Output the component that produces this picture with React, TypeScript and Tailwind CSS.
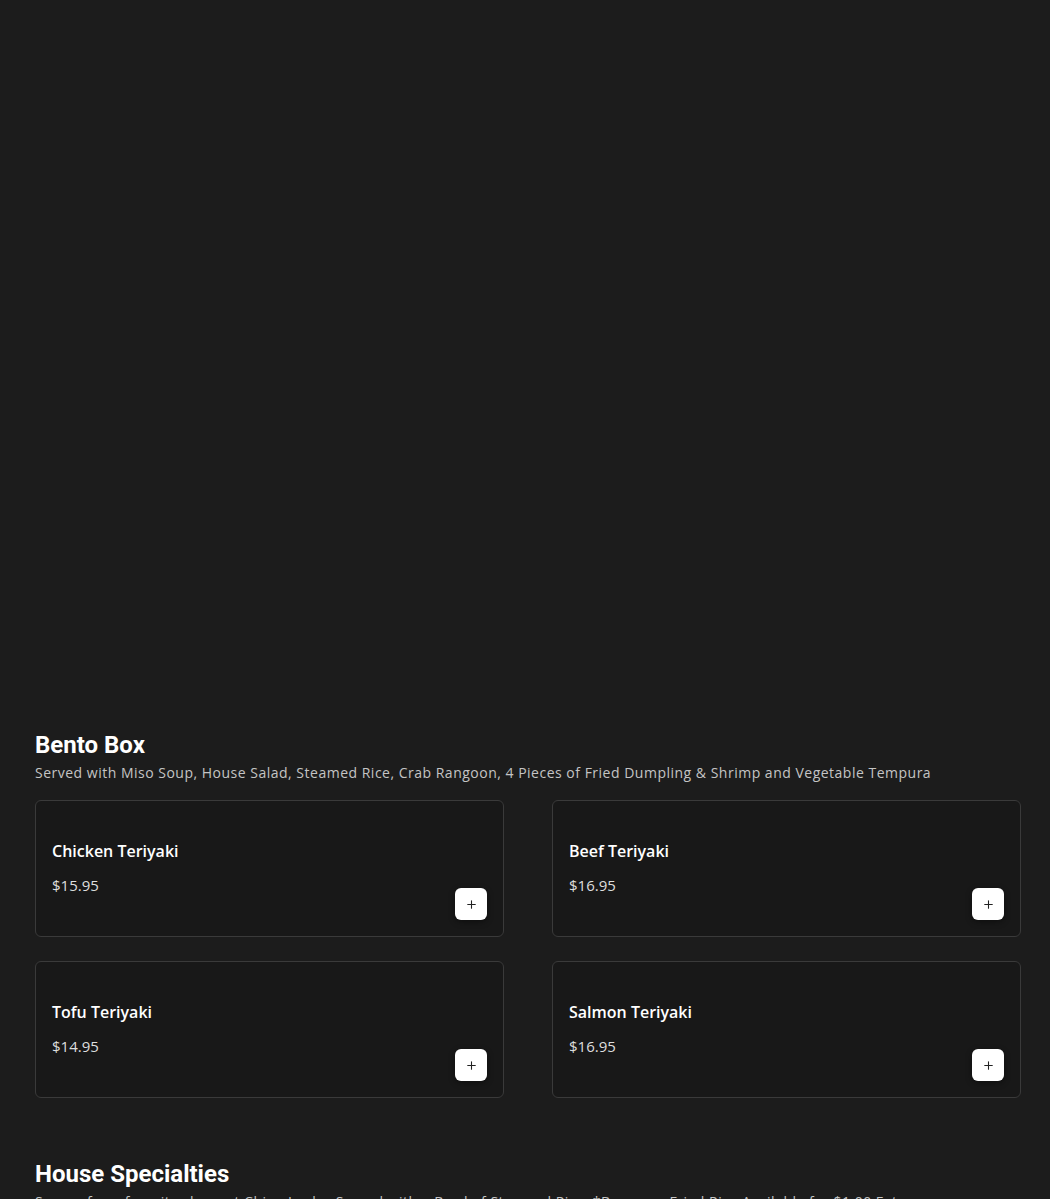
import { Plus } from "lucide-react";

type Item = { name: string; price: string };

const bento: Item[] = [
  { name: "Chicken Teriyaki", price: "$15.95" },
  { name: "Beef Teriyaki", price: "$16.95" },
  { name: "Tofu Teriyaki", price: "$14.95" },
  { name: "Salmon Teriyaki", price: "$16.95" },
];

const body = { fontFamily: '"Open Sans", "Noto Sans", sans-serif' };
const head = { fontFamily: 'Roboto, "Liberation Sans", sans-serif' };

function ItemCard({ item }: { item: Item }) {
  return (
    <div className="flex h-[137px] items-end justify-between rounded-md border border-[#3a3a3a] bg-[#181818] px-4 pb-4 pt-[36px]">
      <div className="flex h-full flex-col self-start">
        <div className="text-[16px] font-semibold leading-[28px] text-white">{item.name}</div>
        <div className="mt-[6px] text-[15px] leading-[28px] text-[#dedede]">{item.price}</div>
      </div>
      <button className="flex h-8 w-8 items-center justify-center rounded-md bg-white text-[#222] shadow-[0_2px_6px_rgba(0,0,0,0.4)]">
        <Plus size={13} strokeWidth={2} />
      </button>
    </div>
  );
}

function Section({
  title,
  desc,
  items,
}: {
  title: string;
  desc: string;
  items: Item[];
}) {
  return (
    <section className="mb-[61px]">
      <h2 className="text-[24px] font-bold leading-[30px] text-white" style={head}>
        {title}
      </h2>
      <p className="text-[14px] leading-[26px] tracking-[0.5px] text-[#c4c4c4]">{desc}</p>
      {items.length > 0 && (
        <div className="mt-[14px] grid grid-cols-2 gap-x-[48px] gap-y-[24px]">
          {items.map((it) => (
            <ItemCard key={it.name} item={it} />
          ))}
        </div>
      )}
    </section>
  );
}

export default function App() {
  return (
    <div className="min-h-screen bg-[#1c1c1c]" style={body}>
      {/* empty hero area */}
      <div className="h-[730px]" />
      <div className="px-[35px] pr-[29px]">
        <Section
          title="Bento Box"
          desc="Served with Miso Soup, House Salad, Steamed Rice, Crab Rangoon, 4 Pieces of Fried Dumpling & Shrimp and Vegetable Tempura"
          items={bento}
        />
        <Section
          title="House Specialties"
          desc="Some of our favorites here at China Lucky. Served with a Bowl of Steamed Rice; *Brown or Fried Rice Available for $1.00 Extra"
          items={[]}
        />
      </div>
    </div>
  );
}
